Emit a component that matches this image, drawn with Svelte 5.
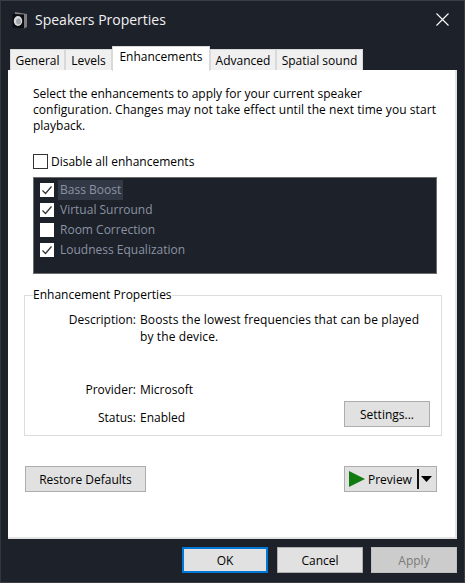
<script>
  const tabs = [
    { label: 'General', w: 55 },
    { label: 'Levels', w: 47 },
    { label: 'Enhancements', w: 98, active: true },
    { label: 'Advanced', w: 66 },
    { label: 'Spatial sound', w: 87 }
  ];
  const items = [
    { label: 'Bass Boost', on: true, sel: true },
    { label: 'Virtual Surround', on: true },
    { label: 'Room Correction', on: false },
    { label: 'Loudness Equalization', on: true }
  ];
</script>

<div class="win">
  <header class="title">
    <svg class="appicon" width="16" height="18" viewBox="0 0 16 18">
      <path d="M3 1 L15 3 L15 16 L12 17.5 L3 16 Z" fill="#7d7d82" />
      <path d="M0.5 3 L12 3.5 L12 17.5 L0.5 16.5 Z" fill="#0c0c0e" />
      <ellipse cx="6" cy="10" rx="4.2" ry="5" fill="#d8dade" />
      <ellipse cx="6.5" cy="10.5" rx="2.4" ry="3" fill="#9ea2a8" />
    </svg>
    <span class="t">Speakers Properties</span>
    <svg class="close" width="13" height="13" viewBox="0 0 13 13"><path d="M0.5 0.5 L12.5 12.5 M12.5 0.5 L0.5 12.5" stroke="#fff" stroke-width="1.1" fill="none" /></svg>
  </header>

  <nav class="tabs">
    {#each tabs as t}
      <div class="tab" class:active={t.active} style="width:{t.w}px">{t.label}</div>
    {/each}
  </nav>

  <main class="panel">
    <p class="intro">Select the enhancements to apply for your current speaker<br /><span class="l2">configuration. Changes may not take effect until the next time you start</span><br />playback.</p>

    <label class="disable"><span class="box0"></span>Disable all enhancements</label>

    <ul class="list">
      {#each items as it}
        <li class="row">
          <span class="cb">
            {#if it.on}
              <svg width="14" height="14" viewBox="0 0 14 14"><path d="M2.5 7.5 L5.5 10.5 L11.5 3.5" stroke="#333" stroke-width="1.2" fill="none" /></svg>
            {/if}
          </span>
          <span class="lbl" class:sel={it.sel}>{it.label}</span>
        </li>
      {/each}
    </ul>

    <fieldset class="group">
      <legend>Enhancement Properties</legend>
      <div class="props">
        <div class="k">Description:</div>
        <div class="v desc">Boosts the lowest frequencies that can be played<br />by the device.</div>
        <div class="k prov">Provider:</div>
        <div class="v prov">Microsoft</div>
        <div class="k stat">Status:</div>
        <div class="v stat">
          <span>Enabled</span>
          <button class="btn settings">Settings...</button>
        </div>
      </div>
    </fieldset>

    <div class="actions">
      <button class="btn restore">Restore Defaults</button>
      <button class="btn preview">
        <svg width="16" height="16" viewBox="0 0 16 16"><path d="M0 0 L16 8 L0 16 Z" fill="#107c10" /></svg>
        <span class="ptxt">Preview</span>
        <span class="sep"></span>
        <svg width="11" height="6" viewBox="0 0 11 6"><path d="M0 0 H11 L5.5 6 Z" fill="#000" /></svg>
      </button>
    </div>
  </main>

  <footer class="foot">
    <button class="btn ok">OK</button>
    <button class="btn cancel">Cancel</button>
    <button class="btn apply">Apply</button>
  </footer>
</div>

<style>
  :global(body) { margin: 0; background: #1d212a; }
  .win {
    width: 465px; height: 583px; box-sizing: border-box;
    background: #1d212a;
    border: 1px solid #3a3d44; border-left-color: #33363d; 
    font-family: "Open Sans", "Noto Sans", sans-serif;
    font-size: 12px; color: #000;
    display: flex; flex-direction: column;
    overflow: hidden;
  }
  .title { height: 45px; flex: none; display: flex; align-items: center; padding: 0 15px 8px 11px; box-sizing: border-box; }
  .appicon { margin-right: 7px; }
  .t { color: #f2f2f2; font-size: 14px; flex: 1; }
  .tabs { display: flex; align-items: flex-end; height: 24px; padding-left: 9px; flex: none; position: relative; z-index: 1; }
  .tab {
    box-sizing: border-box; height: 21px; background: #f0f0f0; border: 1px solid #d9d9d9; border-bottom: none;
    text-align: center; line-height: 21px; color: #000; white-space: nowrap;
  }
  .tab.active { background: #fff; line-height: 20px; margin-bottom: -1px; height: 25px; }
  .panel {
    flex: none; width: 449px; height: 469px; margin-left: 7px; box-sizing: border-box;
    background: #fff; border-right: 2px solid #e3e3e3; border-bottom: 2px solid #e3e3e3;
    padding: 15px 10px 0 16px; position: relative;
  }
  .intro { margin: 1px 0 0 9px; line-height: 16px; color: #000; height: 48px; white-space: nowrap; }
  .l2 { letter-spacing: 0.07px; }
  .disable { display: flex; align-items: center; margin: 19px 0 0 9px; height: 17px; }
  .box0 { width: 13px; height: 13px; border: 1px solid #333; background: #fff; margin-right: 3px; }
  .list { list-style: none; margin: 7px 0 0 9px; padding: 2px 0 0 6px; width: 404px; height: 97px; box-sizing: border-box; background: #1d212a; border: 1px solid #6d6d6d; }
  .row { height: 20px; display: flex; align-items: center; }
  .cb { width: 14px; height: 14px; background: #fff; display: block; margin-right: 4px; flex: none; }
  .cb svg { display: block; }
  .lbl { color: #8a93a3; padding: 0 2px; height: 20px; line-height: 20px; }
  .lbl.sel { background: #323845; }
  .group {
    margin: 13px 0 0 0; padding: 0; width: 418px; height: 149px; box-sizing: border-box;
    border: 1px solid #dcdcdc;
  }
  .group legend { padding: 0; margin-left: 8px; line-height: 16px; }
  .props { display: grid; grid-template-columns: 111px 1fr; column-gap: 4px; padding-top: 8px; }
  .k { text-align: right; line-height: 17px; }
  .v { line-height: 17px; }
  .desc { height: 61px; letter-spacing: 0.115px; white-space: nowrap; }
  .prov { margin-top: 9px; }
  .stat { margin-top: 11px; }
  .v.stat { display: flex; justify-content: space-between; align-items: flex-start; padding-right: 11px; }
  .btn {
    box-sizing: border-box; height: 26px; background: #e1e1e1; border: 1px solid #adadad; font: inherit; color: #000; padding: 0; margin: 0;
  }
  .settings { width: 86px; margin-top: -8px; }
  .actions { display: flex; justify-content: space-between; margin: 30px 0 0 1px; width: 412px; }
  .restore { width: 121px; }
  .preview { width: 93px; display: flex; align-items: center; padding-left: 4px; }
  .ptxt { margin-left: 3px; }
  .sep { width: 2px; height: 20px; background: #111; margin: 0 2px 0 5px; }
  .foot { display: flex; padding: 8px 0 0 181px; gap: 9px; }
  .foot .btn { width: 86px; }
  .ok { border: 2px solid #0078d7; }
  .foot .apply { background: #cccccc; border-color: #bfbfbf; color: #7a7a7a; margin-left: -1px; }
</style>
